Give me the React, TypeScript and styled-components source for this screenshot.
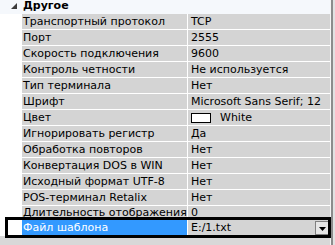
import React from 'react';
import styled, { createGlobalStyle } from 'styled-components';

const GlobalStyle = createGlobalStyle`
  html, body {
    margin: 0;
    padding: 0;
    background: #ffffff;
  }
  body {
    font-family: "DejaVu Sans", Verdana, sans-serif;
    font-size: 11px;
    color: #000;
  }
`;

const Panel = styled.div`
  position: relative;
  width: 335px;
  height: 245px;
  overflow: hidden;
  display: flex;
  background: #ffffff;
`;

const Grid = styled.div`
  width: 330px;
  display: flex;
  flex-direction: column;
`;

const Edge = styled.div`
  width: 5px;
  display: flex;
  background: #e2e2e2;
  border-left: 1px solid #f4f4f4;
  & > div {
    width: 2px;
    background: #8c8c8c;
  }
`;

const Header = styled.div`
  height: 14px;
  flex-shrink: 0;
  display: flex;
  align-items: flex-start;
  background: #f5f8fc;
  font-weight: bold;
  line-height: 12px;
  padding-left: 11px;
  gap: 6px;
`;

const Arrow = styled.svg`
  margin-top: 3px;
  width: 6px;
  height: 6px;
`;

const Row = styled.div<{ $short?: boolean }>`
  height: ${(p) => (p.$short ? '13px' : '15px')};
  flex-shrink: 0;
  display: grid;
  grid-template-columns: 21px 165px 143px;
  column-gap: 1px;
  border-bottom: 1px solid #ffffff;
  line-height: 15px;
`;

const Indent = styled.div`
  background: #ffffff;
`;

const Cell = styled.div<{ $selected?: boolean; $value?: boolean }>`
  background: ${(p) => (p.$selected ? '#3399ff' : '#d4d4d4')};
  color: ${(p) => (p.$selected ? '#ffffff' : '#000000')};
  padding-left: ${(p) => (p.$value ? '3px' : '1px')};
  white-space: nowrap;
  overflow: hidden;
  display: flex;
  align-items: center;
`;

const Swatch = styled.span`
  width: 18px;
  height: 8px;
  border: 1px solid #000;
  background: #fff;
  margin-right: 9px;
`;

const DropButton = styled.div`
  margin-left: auto;
  margin-right: 1px;
  width: 15px;
  height: 14px;
  border: 1px solid #808080;
  background: #e6e6e6;
  display: flex;
  align-items: flex-end;
  justify-content: center;
  padding-bottom: 3px;
  box-sizing: border-box;
`;

const Footer = styled.div`
  flex: 1;
  background: #d8d8d8;
`;

const Highlight = styled.div`
  position: absolute;
  left: 5px;
  top: 217px;
  width: 326px;
  height: 21px;
  box-sizing: border-box;
  border: 3px solid #000;
  pointer-events: none;
`;

const rows: [string, React.ReactNode][] = [
  ['Транспортный протокол', 'TCP'],
  ['Порт', '2555'],
  ['Скорость подключения', '9600'],
  ['Контроль четности', 'Не используется'],
  ['Тип терминала', 'Нет'],
  ['Шрифт', 'Microsoft Sans Serif; 12'],
  ['Цвет', 'color'],
  ['Игнорировать регистр', 'Да'],
  ['Обработка повторов', 'Нет'],
  ['Конвертация DOS в WIN', 'Нет'],
  ['Исходный формат UTF-8', 'Нет'],
  ['POS-терминал Retalix', 'Нет'],
  ['Длительность отображения', '0'],
];

export default function App() {
  return (
    <Panel>
      <GlobalStyle />
      <Grid>
        <Header>
          <Arrow viewBox="0 0 6 6">
            <polygon points="6,0 6,6 0,6" fill="#3c3c3c" />
          </Arrow>
          <span>Другое</span>
        </Header>
        {rows.map(([label, value], i) => (
          <Row key={label} $short={i === rows.length - 1}>
            <Indent />
            <Cell>{label}</Cell>
            <Cell $value>
              {value === 'color' ? (
                <>
                  <Swatch />
                  White
                </>
              ) : (
                value
              )}
            </Cell>
          </Row>
        ))}
        <Row>
          <Indent />
          <Cell $selected>Файл шаблона</Cell>
          <Cell $value>
            E:/1.txt
            <DropButton>
              <svg width="7" height="4" viewBox="0 0 7 4">
                <polygon points="0,0 7,0 3.5,4" fill="#000" />
              </svg>
            </DropButton>
          </Cell>
        </Row>
        <Footer />
      </Grid>
      <Edge>
        <div />
      </Edge>
      <Highlight />
    </Panel>
  );
}
